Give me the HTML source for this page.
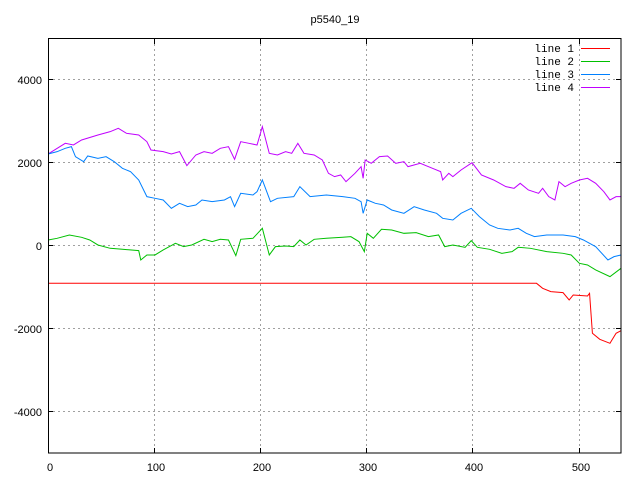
<!DOCTYPE html>
<html><head><style>html,body{margin:0;padding:0;background:#fff;width:640px;height:480px;overflow:hidden}</style></head>
<body>
<svg width="640" height="480" xmlns="http://www.w3.org/2000/svg" font-family="Liberation Sans, sans-serif" font-size="11">
<rect width="640" height="480" fill="#fff"/>
<g stroke="#a0a0a0" stroke-dasharray="2,3" stroke-width="1">
<line x1="48" y1="79.5" x2="621" y2="79.5"/>
<line x1="48" y1="162.5" x2="621" y2="162.5"/>
<line x1="48" y1="245.5" x2="621" y2="245.5"/>
<line x1="48" y1="328.5" x2="621" y2="328.5"/>
<line x1="48" y1="411.5" x2="621" y2="411.5"/>
<line x1="154.5" y1="39" x2="154.5" y2="453"/>
<line x1="260.5" y1="39" x2="260.5" y2="453"/>
<line x1="366.5" y1="39" x2="366.5" y2="453"/>
<line x1="472.5" y1="39" x2="472.5" y2="453"/>
<line x1="579.5" y1="39" x2="579.5" y2="453"/>
</g>
<g stroke="#000" stroke-width="1">
<path d="M48 79.5h5M48 162.5h5M48 245.5h5M48 328.5h5M48 411.5h5M621 79.5h-5M621 162.5h-5M621 245.5h-5M621 328.5h-5M621 411.5h-5M154.5 453v-5M260.5 453v-5M366.5 453v-5M472.5 453v-5M579.5 453v-5M154.5 39v5M260.5 39v5M366.5 39v5M472.5 39v5M579.5 39v5"/>
</g>
<g fill="#000" text-anchor="end">
<text x="42" y="84">4000</text>
<text x="42" y="167">2000</text>
<text x="42" y="250">0</text>
<text x="42" y="333">-2000</text>
<text x="42" y="416">-4000</text>
</g>
<g fill="#000" text-anchor="middle">
<text x="50" y="471">0</text>
<text x="156" y="471">100</text>
<text x="262" y="471">200</text>
<text x="368" y="471">300</text>
<text x="474" y="471">400</text>
<text x="581" y="471">500</text>
<text x="335" y="23">p5540_19</text>
</g>
<g fill="#000" text-anchor="end" font-family="Liberation Mono, monospace" font-size="11">
<text x="574" y="52">line 1</text>
<text x="574" y="65">line 2</text>
<text x="574" y="78">line 3</text>
<text x="574" y="91">line 4</text>
</g>
<line x1="581" y1="48.5" x2="610" y2="48.5" stroke="#ff0000"/>
<line x1="581" y1="61.5" x2="610" y2="61.5" stroke="#00c000"/>
<line x1="581" y1="74.5" x2="610" y2="74.5" stroke="#0080ff"/>
<line x1="581" y1="87.5" x2="610" y2="87.5" stroke="#c000ff"/>
<g transform="matrix(0.408 0 0 0.3333 0 0)" fill="none" stroke-width="1">
<polyline vector-effect="non-scaling-stroke" stroke="#c000ff" points="118,462 160,430 180,435 200,420 240,405 270,395 290,385 310,400 340,405 360,425 370,450 400,455 420,462 440,455 458,497 480,465 500,455 520,460 540,445 560,440 575,478 590,425 610,430 630,435 643,380 660,460 680,465 700,455 715,460 730,430 745,460 770,465 790,480 805,520 820,530 835,525 848,545 870,520 885,500 890,535 895,480 910,490 930,470 950,468 970,490 990,485 1000,500 1030,490 1060,505 1080,515 1085,540 1100,520 1110,530 1130,510 1157,488 1180,525 1210,540 1240,560 1260,565 1275,550 1295,570 1320,580 1330,565 1345,590 1360,600 1370,545 1385,560 1400,550 1420,540 1440,535 1460,550 1480,575 1495,600 1510,590 1522,590"/>
<polyline vector-effect="non-scaling-stroke" stroke="#0080ff" points="118,462 140,455 160,445 175,440 185,470 205,485 215,468 240,475 260,470 280,485 300,505 320,515 340,540 360,590 380,595 400,600 420,625 440,610 460,620 480,615 495,600 520,605 550,600 565,590 575,620 590,580 620,585 630,575 643,540 663,605 680,595 720,590 735,560 760,590 800,585 840,590 870,595 885,605 890,640 900,600 920,610 940,615 960,630 990,640 1015,620 1040,630 1070,640 1085,655 1110,660 1130,640 1155,625 1175,650 1200,675 1220,685 1250,690 1270,685 1290,700 1310,710 1340,705 1380,705 1410,710 1430,720 1460,740 1490,780 1505,770 1522,765"/>
<polyline vector-effect="non-scaling-stroke" stroke="#00c000" points="118,720 140,715 170,705 200,712 220,720 240,735 270,745 300,748 340,752 345,780 360,765 380,765 400,750 430,730 450,740 470,735 500,718 520,725 540,718 560,720 578,767 590,718 620,715 643,685 660,765 675,740 700,738 720,740 735,720 750,735 770,718 800,715 840,712 860,710 880,725 893,755 900,700 915,715 935,688 960,690 990,700 1020,698 1050,710 1075,705 1090,740 1110,735 1140,742 1155,722 1170,742 1200,748 1230,760 1255,755 1270,742 1300,745 1340,755 1380,760 1400,765 1420,790 1440,795 1460,810 1495,830 1522,805"/>
<polyline vector-effect="non-scaling-stroke" stroke="#ff0000" points="118,850 1315,850 1330,865 1350,875 1380,878 1395,900 1405,885 1440,888 1445,880 1452,1000 1470,1018 1495,1030 1510,1000 1522,992"/>
</g>
<rect x="48.5" y="38.5" width="572.5" height="414.5" fill="none" stroke="#000" stroke-width="1"/>
</svg>
</body></html>
